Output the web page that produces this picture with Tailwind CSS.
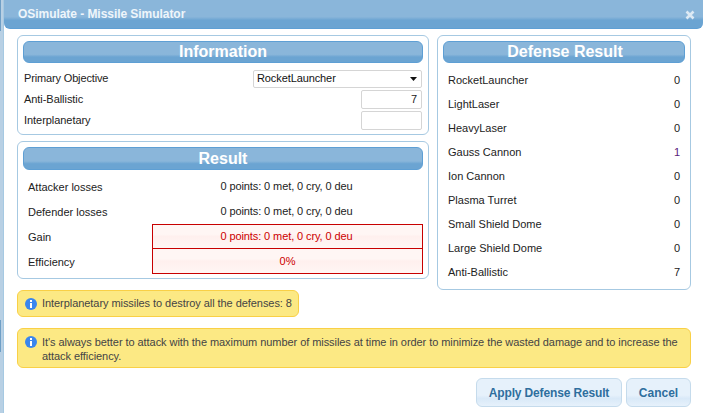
<!DOCTYPE html>
<html lang="en">
<head>
  <meta charset="UTF-8">
  <script src="https://cdn.jsdelivr.net/npm/@tailwindcss/browser@4"></script>
  <title>OSimulate - Missile Simulator</title>
</head>
<body class="relative w-[703px] h-[413px] overflow-hidden bg-[#b8d0e4] font-['Liberation_Sans',Arial,sans-serif] text-[11px] text-[#222]">

<!-- page behind the dialog, only a sliver shows -->
<div class="absolute left-0 top-0 w-[1px] h-[31px] bg-[#6f9fc6]"></div>
<div class="absolute left-0 top-[320px] w-[1px] h-[32px] bg-[#6f9fc6]"></div>

<div class="ml-[3px] h-[413px] bg-white border-l border-[#a6c9e2]">
  <!-- title bar -->
  <div class="h-[29px] flex items-center justify-between pl-[14px] pr-[8px] rounded-b-md border-b border-[#5e9fd4] bg-[linear-gradient(#8ab6da_0,#8ab6da_60%,#6ba4d2_72%,#6ba4d2_100%)]">
    <span class="text-[12px] font-bold text-[#eef5fb] tracking-[-0.05px]">OSimulate - Missile Simulator</span>
    <svg viewBox="0 0 10 10" class="w-[10px] h-[10px] mt-[1px]"><path d="M1.5 1.5 8.5 8.5M8.5 1.5 1.5 8.5" stroke="#dce9f4" stroke-width="2.6"/></svg>
  </div>

  <div class="pl-[13px] pr-[11px] pt-[6px]">
    <div class="flex gap-[8px] h-[255px]">
      <!-- left column -->
      <div class="w-[412px] flex flex-col gap-[6px]">
        <section class="h-[100px] border border-[#a6c9e2] rounded-md p-[5px]">
          <h2 class="h-[22px] flex items-center justify-center rounded-md border border-[#5e9fd4] bg-[linear-gradient(#8ab6da_0,#8ab6da_62%,#6ba4d2_75%,#6ba4d2_100%)] text-white font-bold text-[16px]">Information</h2>
          <div class="flex items-center justify-between h-[21px] mt-[5px] pl-[1px] pr-[1px]">
            <span class="tracking-[-0.15px]">Primary Objective</span>
            <div class="w-[169px] h-[18px] border border-[#d5d5d5] rounded-[2px] flex items-center justify-between pl-[3px] pr-[4px] bg-white">
              <span class="text-[#111] tracking-[-0.1px]">RocketLauncher</span>
              <svg viewBox="0 0 7 4" class="w-[7px] h-[4px]"><path d="M0 0H7L3.5 4Z" fill="#111"/></svg>
            </div>
          </div>
          <div class="flex items-center justify-between h-[21px] pl-[1px] pr-[1px]">
            <span class="tracking-[-0.05px]">Anti-Ballistic</span>
            <div class="w-[61px] h-[19px] border border-[#d5d5d5] rounded-[2px] text-right pr-[4px] leading-[17px] bg-white">7</div>
          </div>
          <div class="flex items-center justify-between h-[21px] pl-[1px] pr-[1px]">
            <span class="tracking-[-0.05px]">Interplanetary</span>
            <div class="w-[61px] h-[19px] border border-[#d5d5d5] rounded-[2px] bg-white"></div>
          </div>
        </section>

        <section class="h-[138px] border border-[#a6c9e2] rounded-md p-[5px]">
          <h2 class="h-[23px] flex items-center justify-center rounded-md border border-[#5e9fd4] bg-[linear-gradient(#8ab6da_0,#8ab6da_62%,#6ba4d2_75%,#6ba4d2_100%)] text-white font-bold text-[16px]">Result</h2>
          <div class="grid grid-cols-[129px_271px] grid-rows-[25px_25px_25px_25px] mt-[4px]">
            <div class="flex items-center pl-[5px] pt-[2px]">Attacker losses</div>
            <div class="flex items-center justify-center pr-[2px] tracking-[-0.1px]">0 points: 0 met, 0 cry, 0 deu</div>
            <div class="flex items-center pl-[5px] pt-[2px]">Defender losses</div>
            <div class="flex items-center justify-center pr-[2px] tracking-[-0.1px]">0 points: 0 met, 0 cry, 0 deu</div>
            <div class="flex items-center pl-[5px] pt-[2px]">Gain</div>
            <div class="flex items-center justify-center pr-[2px] border border-[#c80000] bg-[linear-gradient(#fff6f4_0,#fff6f4_40%,#fff0ee_50%,#fff6f4_100%)] text-[#cc0000] tracking-[-0.1px]">0 points: 0 met, 0 cry, 0 deu</div>
            <div class="flex items-center pl-[5px] pt-[2px]">Efficiency</div>
            <div class="flex items-center justify-center border border-t-0 border-[#c80000] bg-[linear-gradient(#fff6f4_0,#fff6f4_40%,#fff0ee_50%,#fff6f4_100%)] text-[#cc0000]">0%</div>
          </div>
        </section>
      </div>

      <!-- right column -->
      <section class="w-[254px] border border-[#a6c9e2] rounded-md p-[5px]">
        <h2 class="h-[22px] flex items-center justify-center pl-[2px] rounded-md border border-[#5e9fd4] bg-[linear-gradient(#8ab6da_0,#8ab6da_62%,#6ba4d2_75%,#6ba4d2_100%)] text-white font-bold text-[16px]">Defense Result</h2>
        <ul class="mt-[5px] pl-[5px] pr-[5px]">
          <li class="h-[24px] flex items-center justify-between"><span>RocketLauncher</span><span>0</span></li>
          <li class="h-[24px] flex items-center justify-between"><span>LightLaser</span><span>0</span></li>
          <li class="h-[24px] flex items-center justify-between"><span>HeavyLaser</span><span>0</span></li>
          <li class="h-[24px] flex items-center justify-between"><span>Gauss Cannon</span><span class="text-[#5a1a7a]">1</span></li>
          <li class="h-[24px] flex items-center justify-between"><span>Ion Cannon</span><span>0</span></li>
          <li class="h-[24px] flex items-center justify-between"><span>Plasma Turret</span><span>0</span></li>
          <li class="h-[24px] flex items-center justify-between"><span>Small Shield Dome</span><span>0</span></li>
          <li class="h-[24px] flex items-center justify-between"><span>Large Shield Dome</span><span>0</span></li>
          <li class="h-[24px] flex items-center justify-between"><span>Anti-Ballistic</span><span>7</span></li>
        </ul>
      </section>
    </div>

    <!-- notices -->
    <div class="w-[282px] h-[27px] flex items-center gap-[5px] pl-[7px] rounded-md border border-[#f9d046] bg-[#fce984] text-[#444]">
      <svg viewBox="0 0 12 12" class="w-[12px] h-[12px] shrink-0"><circle cx="6" cy="6" r="6" fill="#3a86ee"/><rect x="5" y="2" width="2" height="2" fill="#fff"/><rect x="5" y="5" width="2" height="5" fill="#fff"/></svg>
      <span class="tracking-[-0.06px]">Interplanetary missiles to destroy all the defenses: 8</span>
    </div>
    <div class="w-[674px] h-[40px] mt-[11px] flex items-start gap-[5px] pl-[7px] pr-[10px] pt-[6px] rounded-md border border-[#f9d046] bg-[#fce984] text-[#444]">
      <svg viewBox="0 0 12 12" class="w-[12px] h-[12px] shrink-0 mt-[1px]"><circle cx="6" cy="6" r="6" fill="#3a86ee"/><rect x="5" y="2" width="2" height="2" fill="#fff"/><rect x="5" y="5" width="2" height="5" fill="#fff"/></svg>
      <p class="leading-[14px] tracking-[-0.06px]">It's always better to attack with the maximum number of missiles at time in order to minimize the wasted damage and to increase the attack efficiency.</p>
    </div>

    <!-- buttons -->
    <div class="flex justify-end gap-[4px] mt-[10px] w-[674px]">
      <button class="w-[146px] h-[29px] rounded-md border border-[#c5dbec] bg-[linear-gradient(#e6f1fb_0,#e6f1fb_60%,#d9e9f8_72%,#e6f1fb_100%)] text-[12px] font-bold text-[#2e6e9e] tracking-[-0.15px]">Apply Defense Result</button>
      <button class="w-[65px] h-[29px] rounded-md border border-[#c5dbec] bg-[linear-gradient(#e6f1fb_0,#e6f1fb_60%,#d9e9f8_72%,#e6f1fb_100%)] text-[12px] font-bold text-[#2e6e9e]">Cancel</button>
    </div>
  </div>
</div>
</body>
</html>
